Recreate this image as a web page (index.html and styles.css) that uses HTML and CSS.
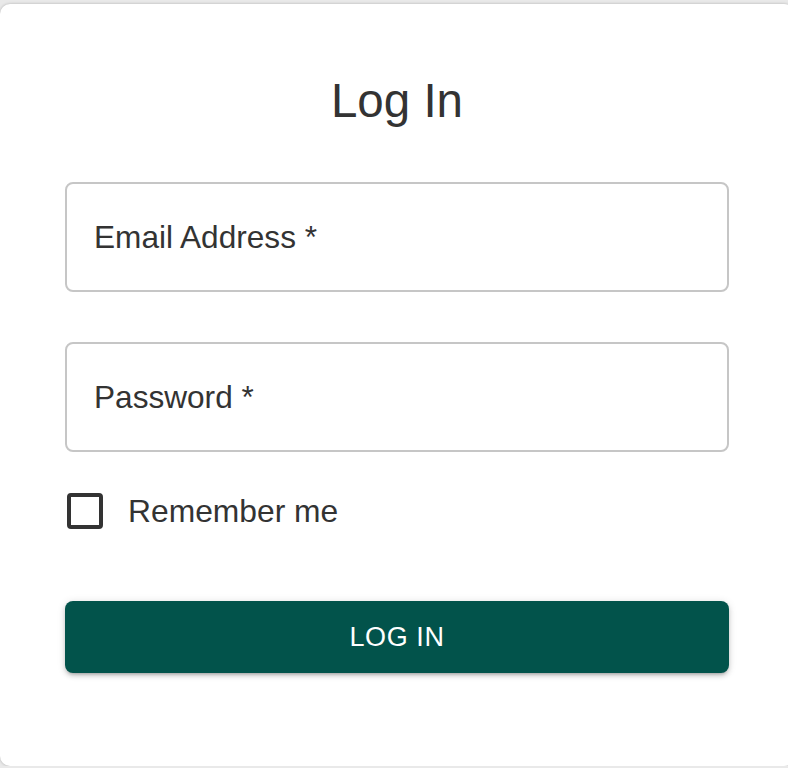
FILE: index.html
```html
<!DOCTYPE html>
<html lang="en">
<head>
    <meta charset="UTF-8">
    <meta name="viewport" content="width=device-width, initial-scale=1.0">
    <title>Log In</title>
    <link rel="stylesheet" href="styles.css">
</head>
<body>

<div class="card">
    <h1 class="title">Log In</h1>

    <form class="login-form" onsubmit="return false;">
        <!-- Email field -->
        <div class="field">
            <span class="field-label">Email Address *</span>
        </div>

        <!-- Password field -->
        <div class="field field-password">
            <span class="field-label">Password *</span>
        </div>

        <label class="remember">
            <input type="checkbox" class="remember-box">
            <span class="remember-text">Remember me</span>
        </label>

        <button type="submit" class="login-button">Log In</button>
    </form>
</div>

</body>
</html>
```

FILE: styles.css
```css
body {
    margin: 0;
    padding: 4px 0 0 0;
    background-color: #e9e9e9;
    font-family: 'Liberation Sans', Arial, sans-serif;
    color: #333;
    overflow: hidden;
}

/* Card holding the form */
.card {
    width: 794px;
    height: 762px;
    box-sizing: border-box;
    padding: 69px 65px 0 65px;
    background-color: #fff;
    border-radius: 10px;
    box-shadow: 0 0 3px rgba(0, 0, 0, 0.25);
}

.title {
    margin: 0;
    font-size: 47.5px;
    line-height: 56px;
    font-weight: 400;
    text-align: center;
    color: #333;
}

.login-form {
    display: flex;
    flex-direction: column;
    margin-top: 53px;
}

/* Outlined input */
.field {
    display: flex;
    align-items: center;
    height: 110px;
    box-sizing: border-box;
    padding: 0 27px;
    border: 2px solid #c6c6c6;
    border-radius: 8px;
}

.field-password {
    margin-top: 50px;
}

.field-label {
    font-size: 31.6px;
    color: #333;
}

/* Remember me checkbox */
.remember {
    display: flex;
    align-items: center;
    height: 36px;
    margin-top: 41px;
    cursor: pointer;
}

.remember-box {
    appearance: none;
    -webkit-appearance: none;
    margin: 0 0 0 2px;
    width: 36px;
    height: 36px;
    box-sizing: border-box;
    border: 4px solid #333;
    border-radius: 4px;
}

.remember-text {
    margin-left: 25px;
    font-size: 31.8px;
}

/* Submit button */
.login-button {
    margin-top: 72px;
    height: 72px;
    border: none;
    border-radius: 8px;
    background-color: #02534b;
    color: #fff;
    font-family: 'Liberation Sans', Arial, sans-serif;
    font-size: 27px;
    letter-spacing: 0.6px;
    text-transform: uppercase;
    box-shadow: 0 3px 3px -2px rgba(0, 0, 0, 0.2), 0 3px 5px 0 rgba(0, 0, 0, 0.14), 0 1px 8px 0 rgba(0, 0, 0, 0.12);
    cursor: pointer;
}
```
